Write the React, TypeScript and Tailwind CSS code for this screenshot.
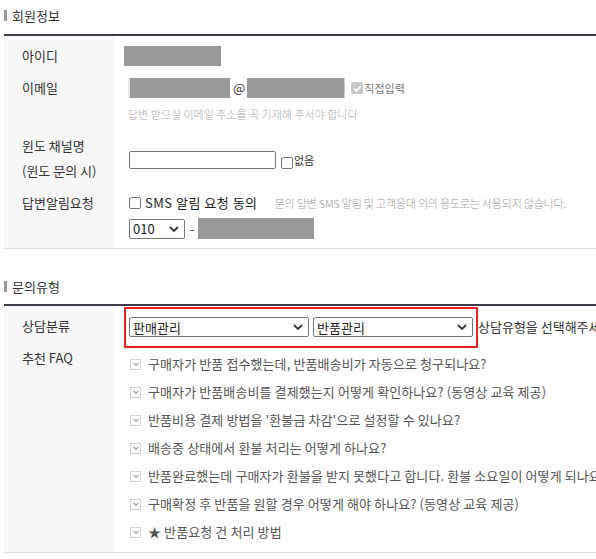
import React from 'react'

const font = { fontFamily: '"Noto Sans CJK KR", "Noto Sans", sans-serif' }

const faqs = [
  '구매자가 반품 접수했는데, 반품배송비가 자동으로 청구되나요?',
  '구매자가 반품배송비를 결제했는지 어떻게 확인하나요? (동영상 교육 제공)',
  "반품비용 결제 방법을 '환불금 차감'으로 설정할 수 있나요?",
  '배송중 상태에서 환불 처리는 어떻게 하나요?',
  '반품완료했는데 구매자가 환불을 받지 못했다고 합니다. 환불 소요일이 어떻게 되나요?',
  '구매확정 후 반품을 원할 경우 어떻게 해야 하나요? (동영상 교육 제공)',
  '★ 반품요청 건 처리 방법',
]

function Chevron({ className = '' }: { className?: string }) {
  return (
    <svg viewBox="0 0 10 6" className={className} fill="none" stroke="currentColor" strokeWidth="1.8">
      <path d="M1 1l4 4 4-4" />
    </svg>
  )
}

function Select({ value, width }: { value: string; width: string }) {
  return (
    <div className={`flex h-[20px] ${width} items-center justify-between rounded-[2px] border border-[#767676] bg-white pl-[3px] pr-[5px] text-[13px] text-[#222]`}>
      <span className="leading-none">{value}</span>
      <Chevron className="h-[6px] w-[10px] text-[#333]" />
    </div>
  )
}

function EmptyBox() {
  return <span className="inline-block h-[12px] w-[12px] rounded-[2px] border border-[#767676] bg-white" />
}

function SectionTitle({ children, top }: { children: React.ReactNode; top: string }) {
  return (
    <div className={`flex h-[18px] items-center gap-[5px] ${top} text-[13px] text-[#333]`}>
      <span className="h-[11px] w-[3px] bg-[#999]" />
      <span className="leading-none">{children}</span>
    </div>
  )
}

export default function App() {
  return (
    <div className="h-[559px] w-[596px] overflow-hidden bg-white pl-[4px]" style={font}>
      <SectionTitle top="mt-[6px]">회원정보</SectionTitle>
      <div className="mt-[10px] border-t-2 border-[#3c3f4b]">
        <div className="grid grid-cols-[110px_1fr] border-b border-[#dddddd] text-[13px] text-[#333]">
          {/* 아이디 */}
          <div className="h-[36px] bg-[#f7f7f7] pl-[18px] pt-[10px] leading-[20px]">아이디</div>
          <div className="pl-[10px] pt-[10px]">
            <div className="h-[20px] w-[97px] bg-[#999999]" />
          </div>

          {/* 이메일 */}
          <div className="h-[58px] bg-[#f7f7f7] pl-[18px] pt-[6px] leading-[20px]">이메일</div>
          <div className="pl-[14px] pt-[6px]">
            <div className="flex h-[20px] items-center">
              <div className="h-[20px] w-[102px] border-l-2 border-[#e5e5e5] bg-[#999999]" />
              <span className="ml-[3px] text-[13px] text-[#333]">@</span>
              <div className="ml-[2px] h-[20px] w-[98px] border-r border-[#ccc] bg-[#999999]" />
              <span className="ml-[6px] flex h-[12px] w-[12px] items-center justify-center rounded-[2px] bg-[#c8c8c8]">
                <svg viewBox="0 0 10 10" className="h-[9px] w-[9px]" fill="none" stroke="white" strokeWidth="1.8">
                  <path d="M1.5 5.2l2.3 2.3L8.5 2.5" />
                </svg>
              </span>
              <span className="ml-[1px] text-[11px] text-[#777]">직접입력</span>
            </div>
            <div className="mt-[8px] text-[11px] font-light leading-[16px] text-[#aaa]">
              답변 받으실 이메일 주소를 꼭 기재해 주서야 합니다
            </div>
          </div>

          {/* 윈도 채널명 */}
          <div className="h-[55px] bg-[#f7f7f7] pl-[18px] pt-[3px] leading-[25px]">
            <div>윈도 채널명</div>
            <div>(윈도 문의 시)</div>
          </div>
          <div className="flex items-start pl-[15px] pt-[21px]">
            <div className="h-[18px] w-[147px] rounded-[2px] border border-[#767676] bg-white" />
            <span className="ml-[5px] mt-[3px]">
              <EmptyBox />
            </span>
            <span className="ml-[1px] text-[11px] leading-[18px] text-[#333]">없음</span>
          </div>

          {/* 답변알림요청 */}
          <div className="h-[63px] bg-[#f7f7f7] pl-[18px] pt-[8px] leading-[20px]">답변알림요청</div>
          <div className="pl-[15px] pt-[8px]">
            <div className="flex h-[20px] items-center">
              <EmptyBox />
              <span className="ml-[4px] text-[13px] tracking-[0.5px] text-[#222]">SMS 알림 요청 동의</span>
              <span className="ml-[17px] text-[11px] font-light tracking-[-0.2px] text-[#999]">
                문의 답변 SMS 알림 및 고객응대 외의 용도로는 사용되지 않습니다.
              </span>
            </div>
            <div className="mt-[5px] flex items-center">
              <Select value="010" width="w-[56px]" />
              <span className="ml-[5px] text-[13px]">-</span>
              <div className="ml-[3px] h-[21px] w-[116px] bg-[#999999]" />
            </div>
          </div>
        </div>
      </div>

      <SectionTitle top="mt-[28px]">문의유형</SectionTitle>
      <div className="relative mt-[9px] border-t-2 border-[#3c3f4b]">
        <div className="grid grid-cols-[110px_1fr] border-b border-[#dddddd] text-[13px] text-[#333]">
          <div className="h-[40px] bg-[#f7f7f7] pl-[18px] pt-[10px] leading-[20px]">상담분류</div>
          <div className="flex items-start pl-[15px] pt-[11px]">
            <Select value="판매관리" width="w-[180px] shrink-0" />
            <div className="ml-[4px] shrink-0">
              <Select value="반품관리" width="w-[160px]" />
            </div>
            <span className="ml-[5px] whitespace-nowrap leading-[20px] text-[#333]">상담유형을 선택해주세요</span>
          </div>

          <div className="bg-[#f7f7f7] pl-[18px] pt-[2px] leading-[20px]">추천 FAQ</div>
          <div className="pb-[6px] pl-[16px] pt-[4px]">
            {faqs.map((q) => (
              <div key={q} className="flex h-[28px] items-center whitespace-nowrap">
                <span className="flex h-[11px] w-[11px] shrink-0 items-center justify-center border border-[#d0d0d0] bg-white">
                  <Chevron className="h-[4px] w-[6px] text-[#999]" />
                </span>
                <span className="ml-[7px] text-[13px] tracking-[0.1px] text-[#555]">{q}</span>
              </div>
            ))}
          </div>
        </div>
        <div className="pointer-events-none absolute left-[120px] top-[1px] h-[41px] w-[354px] border-2 border-[#e8231f]" />
      </div>
    </div>
  )
}
